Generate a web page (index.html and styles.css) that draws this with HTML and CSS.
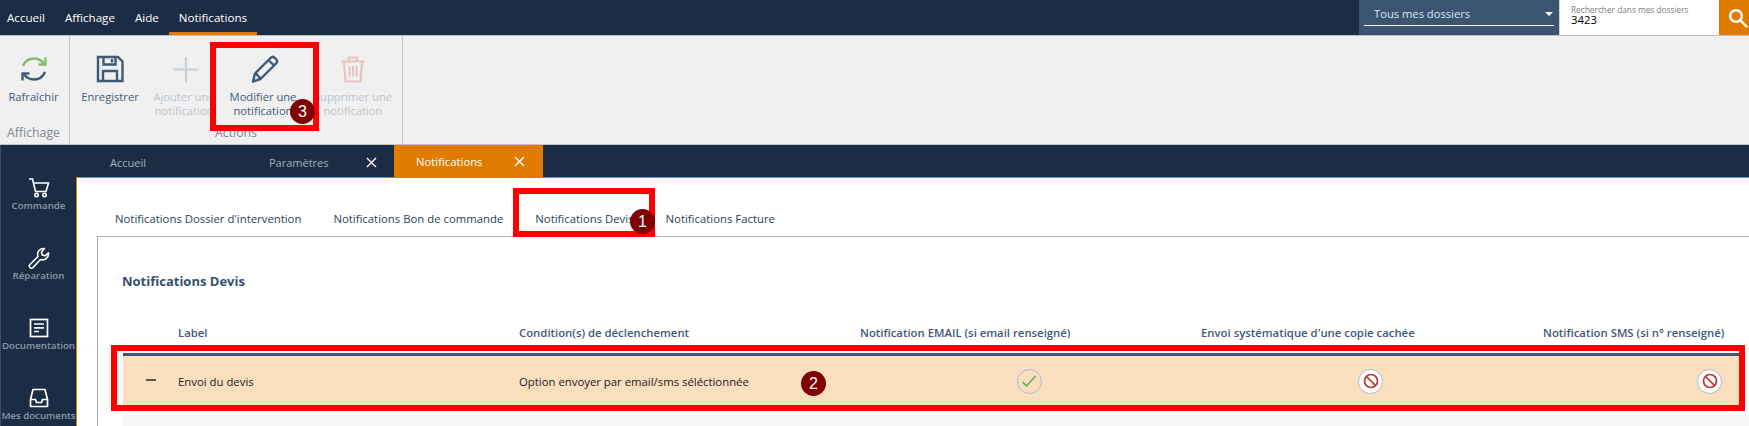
FILE: index.html
```html
<!DOCTYPE html>
<html lang="fr">
<head>
<meta charset="utf-8">
<title>Notifications</title>
<link rel="stylesheet" href="styles.css">
</head>
<body>
<div class="page">
  <header class="topbar">
    <nav class="menu">
      <a class="menu-item">Accueil</a>
      <a class="menu-item">Affichage</a>
      <a class="menu-item">Aide</a>
      <a class="menu-item active">Notifications</a>
    </nav>
    <div class="folder"><div class="folder-select"><span>Tous mes dossiers</span><i class="caret"></i></div></div>
    <div class="search">
      <div class="search-field"><span class="search-label">Rechercher dans mes dossiers</span><span class="search-value">3423</span></div>
      <button class="search-btn"><svg width="22" height="22" viewBox="0 0 22 22" fill="none" stroke="#fff" stroke-width="2.4"><circle cx="9" cy="9" r="5.800"/><path d="M13.500 13.500l6 6" stroke-linecap="round"/></svg></button>
    </div>
  </header>

  <section class="ribbon">
    <div class="group group-view">
      <div class="group-items">
        <div class="rbtn">
          <svg class="ricon" width="30" height="30" viewBox="0 0 30 30" fill="none" stroke-width="2.4"><path d="M4 12C6 7 10 4.500 15 4.500c4 0 7.500 2 10 5" stroke="#7fbf6a"/><path d="M26.500 3.500v7h-7" stroke="#7fbf6a"/><path d="M26 18c-2 5-6 7.500-11 7.500-4 0-7.500-2-10-5" stroke="#3f5a78"/><path d="M3.500 26.500v-7h7" stroke="#3f5a78"/></svg>
          <span>Rafraîchir</span>
        </div>
      </div>
      <div class="group-name">Affichage</div>
    </div>
    <div class="group group-actions">
      <div class="group-items">
        <div class="rbtn w-save">
          <svg class="ricon" width="30" height="30" viewBox="0 0 30 30" fill="none" stroke="#3f5a78" stroke-width="2.400"><path d="M3 3h20l4.500 4.500V27H3z"/><path d="M8.500 3.500v7h12v-7M17 5v3.500" /><path d="M8 27v-10h14v10"/></svg>
          <span>Enregistrer</span>
        </div>
        <div class="rbtn disabled w-add">
          <svg class="ricon plus" width="30" height="30" viewBox="0 0 30 30" fill="none" stroke="#c6cfda" stroke-width="2.200"><path d="M15 3v25M2.500 15.500h25"/></svg>
          <span>Ajouter une<br>notification</span>
        </div>
        <div class="rbtn w-edit">
          <svg class="ricon pencil" width="30" height="30" viewBox="0 0 30 30" fill="none" stroke="#3f5a78" stroke-width="2.400"><path d="M3 27.500l2-8L20.500 4c1.500-1.500 3-1.500 4.500 0l1 1c1.500 1.500 1.500 3 0 4.500L10.500 25z" stroke-linejoin="round"/><path d="M5.500 19l5 5.500M18.500 6l5.500 5.500"/></svg>
          <span>Modifier une<br>notification</span>
        </div>
        <div class="rbtn disabled w-del">
          <svg class="ricon" width="30" height="30" viewBox="0 0 30 30" fill="none" stroke="#e9c3bf" stroke-width="2.200"><path d="M3 7.500h24M11 7V3.500h8V7M6 8l1.500 19.500h15L24 8"/><path d="M11.500 12v10.500M15 12v10.500M18.500 12v10.500" stroke-width="2"/></svg>
          <span>Supprimer une<br>notification</span>
        </div>
      </div>
      <div class="group-name">Actions</div>
    </div>
  </section>

  <main class="main">
    <aside class="rail">
      <div class="rail-item">
        <svg width="22" height="20" viewBox="0 0 22 20" fill="none" stroke="#fff" stroke-width="1.600"><path d="M1 1h3.500l3 12.500h10.500L20.500 5H5.500"/><circle cx="8.500" cy="17" r="1.700"/><circle cx="16.500" cy="17" r="1.700"/></svg>
        <span>Commande</span>
      </div>
      <div class="rail-item">
        <svg width="22" height="22" viewBox="0 0 22 22" fill="none" stroke="#fff" stroke-width="1.600"><path d="M2 17.500L10 9.500C8.500 5 11.500 1 16.500 1.500L13.500 5l.7 3 3 .8 3.300-3C21 10.500 17 14 12.500 12.500L5 20.500c-1 1-2 1-3 0s-1-2 0-3z" stroke-linejoin="round"/></svg>
        <span>Réparation</span>
      </div>
      <div class="rail-item">
        <svg width="20" height="20" viewBox="0 0 20 20" fill="none" stroke="#fff" stroke-width="1.700"><rect x="1.500" y="1.500" width="17" height="17"/><path d="M5 6h10M5 9.800h10M5 13.500h5"/></svg>
        <span>Documentation</span>
      </div>
      <div class="rail-item">
        <svg width="20" height="20" viewBox="0 0 20 20" fill="none" stroke="#fff" stroke-width="1.700"><path d="M1.500 11.500L4 1.500h12l2.500 10v7h-17z" stroke-linejoin="round"/><path d="M1.500 11.500h5l1 3h5l1-3h5"/></svg>
        <span>Mes documents</span>
      </div>
    </aside>
    <div class="workspace">
      <div class="doc-tabs">
        <div class="doc-tab t-home"><span>Accueil</span></div>
        <div class="doc-tab t-param"><span>Paramètres</span><svg class="close" width="11" height="11" viewBox="0 0 11 11" stroke="#fff" stroke-width="1.400"><path d="M1 1l9 9M10 1l-9 9"/></svg></div>
        <div class="doc-tab t-notif"><span>Notifications</span><svg class="close" width="11" height="11" viewBox="0 0 11 11" stroke="#fff" stroke-width="1.400"><path d="M1 1l9 9M10 1l-9 9"/></svg></div>
      </div>
      <div class="content">
        <div class="sub-tabs">
          <span class="sub-tab">Notifications Dossier d'intervention</span>
          <span class="sub-tab">Notifications Bon de commande</span>
          <span class="sub-tab">Notifications Devis</span>
          <span class="sub-tab">Notifications Facture</span>
        </div>
        <div class="panel">
          <h2 class="panel-title">Notifications Devis</h2>
          <div class="grid head">
            <div></div>
            <div>Label</div>
            <div>Condition(s) de déclenchement</div>
            <div>Notification EMAIL (si email renseigné)</div>
            <div>Envoi systématique d'une copie cachée</div>
            <div>Notification SMS (si n° renseigné)</div>
          </div>
          <div class="grid row selected">
            <div class="minus"><i></i></div>
            <div>Envoi du devis</div>
            <div>Option envoyer par email/sms séléctionnée</div>
            <div class="center"><span class="state"><svg width="18" height="18" viewBox="0 0 18 18" fill="none" stroke="#5cab55" stroke-width="1.500"><path d="M2.500 10l4 4L15.500 4"/></svg></span></div>
            <div class="center"><span class="state white"><svg width="18" height="18" viewBox="0 0 18 18" fill="none" stroke="#c0342c" stroke-width="1.700"><circle cx="9" cy="9" r="6.500"/><path d="M4.500 4.500l9 9"/></svg></span></div>
            <div class="center"><span class="state white"><svg width="18" height="18" viewBox="0 0 18 18" fill="none" stroke="#c0342c" stroke-width="1.700"><circle cx="9" cy="9" r="6.500"/><path d="M4.500 4.500l9 9"/></svg></span></div>
          </div>
          <div class="row-next"></div>
        </div>
      </div>
    </div>
  </main>

  <div class="mark mark-1"></div>
  <div class="mark mark-2"></div>
  <div class="mark mark-3"></div>
  <div class="badge badge-1">1</div>
  <div class="badge badge-2">2</div>
  <div class="badge badge-3">3</div>
</div>
</body>
</html>
```
FILE: styles.css
```css
* { box-sizing: border-box; }
html, body { margin: 0; height: 100%; overflow: hidden; background: #fff; }
body { font-family: "Open Sans", "Noto Sans", sans-serif; font-size: 12px; color: #1b2d45; }
.page { position: relative; width: 1749px; height: 426px; overflow: hidden; display: flex; flex-direction: column; }

.topbar { height: 36px; flex: none; background: #1b2d45; display: flex; border-bottom: 1px solid #b9bfc6; }
.menu { display: flex; flex: 1; font-size: 11.600px; }
.menu-item { color: #fff; line-height: 35px; padding: 0 10px; height: 35px; }
.menu-item:first-child { padding-left: 7px; }
.menu-item.active { border-bottom: 3px solid #e07b00; }
.folder { width: 200px; background: #3a5472; padding: 0 5px; }
.folder-select { height: 26px; border-bottom: 1px solid #fff; color: #dbe6f0; font-size: 11.200px; line-height: 28px; padding-left: 10px; position: relative; }
.caret { position: absolute; right: 1px; top: 12px; border: 4px solid transparent; border-top: 4px solid #fff; }
.search { display: flex; width: 190px; }
.search-field { width: 162px; background: #fff; padding: 5px 0 0 11px; display: flex; flex-direction: column; border-left: 1px solid #cfd5dc; }
.search-label { font-size: 8.300px; line-height: 10px; color: #7d7d7d; white-space: nowrap; }
.search-value { font-size: 11.300px; line-height: 10px; color: #000; }
.search-btn { flex: 1; border: 0; padding: 0 0 0 8px; background: #e07b00; display: flex; align-items: center; justify-content: center; }

.ribbon { height: 109px; flex: none; background: #f0f0f0; border-bottom: 1px solid #c4c4c4; display: flex; }
.group { display: flex; flex-direction: column; border-right: 1px solid #c4c4c4; height: 108px; }
.group-view { width: 70px; padding-right: 2px; }
.group-actions { width: 333px; }
.group-items { display: flex; flex: 1; height: 88px; }
.group-name { text-align: center; color: #7b8896; font-size: 12.300px; line-height: 16px; padding-bottom: 3px; }
.rbtn { display: flex; flex-direction: column; align-items: center; text-align: center; color: #3f5a78; line-height: 14px; padding-top: 18px; width: 100%; white-space: nowrap; font-size: 11.200px; }
.ricon { margin-bottom: 6px; flex: none; }
.pencil { margin-left: 4px; }
.plus { margin-left: 4px; }
.rbtn.disabled { color: #bcc6d1; }
.w-save { width: 80px; }
.w-add { width: 68px; }
.w-edit { width: 90px; }
.w-del { width: 90px; }

.main { flex: 1; display: flex; background: #1b2d45; min-height: 0; }
.rail { width: 76px; flex: none; border-left: 1px solid #35506e; padding-top: 32px; }
.rail-item { height: 70px; display: flex; flex-direction: column; align-items: center; color: #8c99a8; font-size: 9.700px; font-weight: 600; line-height: 14px; white-space: nowrap; }
.rail-item svg { height: 22px; flex: none; }
.workspace { flex: 1; display: flex; flex-direction: column; min-width: 0; }
.doc-tabs { height: 32px; display: flex; flex: none; }
.doc-tab { display: flex; align-items: center; color: #a4b1c0; font-size: 11px; line-height: 32px; padding-top: 3px; }
.t-home { width: 159px; padding-left: 34px; }
.t-param { width: 159px; padding-left: 34px; }
.t-param .close { margin-left: 37px; }
.t-notif { width: 149px; background: #e07b00; color: #fff; padding-left: 22px; padding-top: 1px; font-size: 11.300px; }
.t-notif .close { margin-left: 31px; margin-top: -1px; }

.content { flex: 1; background: #fff; border-top: 1px solid #e07b00; border-left: 1px solid #e07b00; padding-left: 20px; display: flex; flex-direction: column; min-height: 0; }
.sub-tabs { height: 58px; flex: none; display: flex; align-items: center; padding: 22px 0 0 18px; color: #2b3f57; font-size: 11.350px; }
.sub-tab { margin-right: 32px; white-space: nowrap; }
.panel { flex: 1; border-top: 1px solid #a5b1c0; border-left: 1px solid #a5b1c0; padding-left: 25px; min-height: 0; }
.panel-title { margin: 0 0 0 -1px; padding: 35px 0 0; font-size: 13px; line-height: 18px; font-weight: 700; color: #34506f; height: 85px; }
.grid { display: grid; grid-template-columns: 55px 341px 341px 341px 342px 336px; }
.head { height: 31px; line-height: 22px; color: #3f5a78; font-weight: 600; font-size: 11.350px; white-space: nowrap; }
.row { height: 54px; margin-right: 4px; align-items: center; background: #fadfbf; border-top: 3px solid #3f5a78; color: #1b1b1b; font-size: 11.350px; white-space: nowrap; border-bottom: 1px solid #ddd; }
.minus { display: flex; padding: 0 0 2px 23px; }
.minus i { display: block; width: 10px; height: 2px; background: #5a5450; }
.center { display: flex; justify-content: center; padding-right: 3px; }
.state { width: 25px; height: 25px; border-radius: 50%; border: 1.500px solid #aebbcb; display: flex; align-items: center; justify-content: center; }
.state.white { background: #fff; }
.row-next { height: 40px; margin-top: 8px; background: #f5f6f8; }

.mark { position: absolute; border: 6px solid #f00; pointer-events: none; }
.mark-1 { left: 513px; top: 188px; width: 142px; height: 49px; }
.mark-2 { left: 111px; top: 345px; width: 1634px; height: 66px; }
.mark-3 { left: 210px; top: 42px; width: 109px; height: 89px; }
.badge { position: absolute; width: 25px; height: 25px; border-radius: 50%; background: #800000; color: #fff; font-family: "Liberation Sans", sans-serif; font-size: 16px; line-height: 25px; text-align: center; }
.badge-1 { left: 630px; top: 209px; }
.badge-2 { left: 801px; top: 371px; }
.badge-3 { left: 290px; top: 99px; }
```
